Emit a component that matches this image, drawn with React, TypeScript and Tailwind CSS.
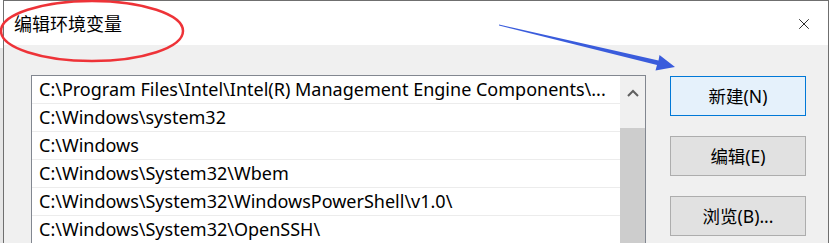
import { X } from 'lucide-react';

const paths = [
  'C:\\Program Files\\Intel\\Intel(R) Management Engine Components\\...',
  'C:\\Windows\\system32',
  'C:\\Windows',
  'C:\\Windows\\System32\\Wbem',
  'C:\\Windows\\System32\\WindowsPowerShell\\v1.0\\',
  'C:\\Windows\\System32\\OpenSSH\\',
];

const font = { fontFamily: '"Noto Sans", "Noto Sans CJK SC", sans-serif' };

/** Annotation marks drawn over the screenshot: red ellipse and blue arrow. */
function Annotations() {
  return (
    <svg className="pointer-events-none absolute inset-0" width="829" height="243">
      <ellipse cx="92" cy="31" rx="91" ry="30" fill="none" stroke="#ee3338" strokeWidth="2.5" />
      <polygon
        fill="#3a5cdc"
        points="499,24.5 658.5,60.5 659.5,55 675,67 655.5,70.5 657,65 499,25.5"
      />
    </svg>
  );
}

export default function App() {
  return (
    <div className="relative flex h-[243px] w-[829px] overflow-hidden bg-white text-black" style={font}>
      {/* window behind the dialog */}
      <div className="flex w-[3px] shrink-0 flex-col">
        <div className="h-[48px] bg-white" />
        <div className="flex-1 bg-[#e6e6e6]" />
      </div>

      <div className="flex min-h-0 flex-1 flex-col border-l border-r border-t border-[#6f6f6f]">
        <div className="flex h-[44px] shrink-0 items-center justify-between bg-white pl-[10px] pr-[15px] pt-[2px]">
          <span className="text-[18px] leading-none">编辑环境变量</span>
          <X className="h-[18px] w-[18px] text-black" strokeWidth={1.1} />
        </div>

        <div className="flex min-h-0 flex-1 gap-[24px] overflow-hidden bg-[#f0f0f0] pl-[27px] pt-[30px]">
          <div className="flex h-[200px] w-[615px] shrink-0 border border-[#828790] bg-white">
            <div className="flex w-[588px] flex-col">
              {paths.map((p) => (
                <div
                  key={p}
                  className="flex h-[28px] shrink-0 items-center whitespace-nowrap border-b border-[#ececec] pl-[7px] text-[18px]"
                >
                  {p}
                </div>
              ))}
            </div>
            <div className="flex w-[25px] flex-col bg-[#f0f0f0]">
              <div className="flex h-[32px] items-center justify-center pt-[1px]">
                <svg width="12" height="8" viewBox="0 0 12 8">
                  <path d="M1 7 L6 2 L11 7" fill="none" stroke="#606060" strokeWidth="2" />
                </svg>
              </div>
              <div className="h-[20px]" />
              <div className="flex-1 bg-[#cdcdcd]" />
            </div>
          </div>

          <div className="flex shrink-0 flex-col gap-[20px] pt-[1px]">
            <button className="flex h-[40px] w-[136px] items-center justify-center border border-[#0078d7] bg-[#e5f1fb] text-[17.5px]">
              新建(N)
            </button>
            <button className="flex h-[40px] w-[136px] items-center justify-center border border-[#adadad] bg-[#e1e1e1] text-[17.5px]">
              编辑(E)
            </button>
            <button className="flex h-[40px] w-[136px] items-center justify-center border border-[#adadad] bg-[#e1e1e1] text-[17.5px]">
              浏览(B)...
            </button>
          </div>
        </div>
      </div>

      <Annotations />
    </div>
  );
}
